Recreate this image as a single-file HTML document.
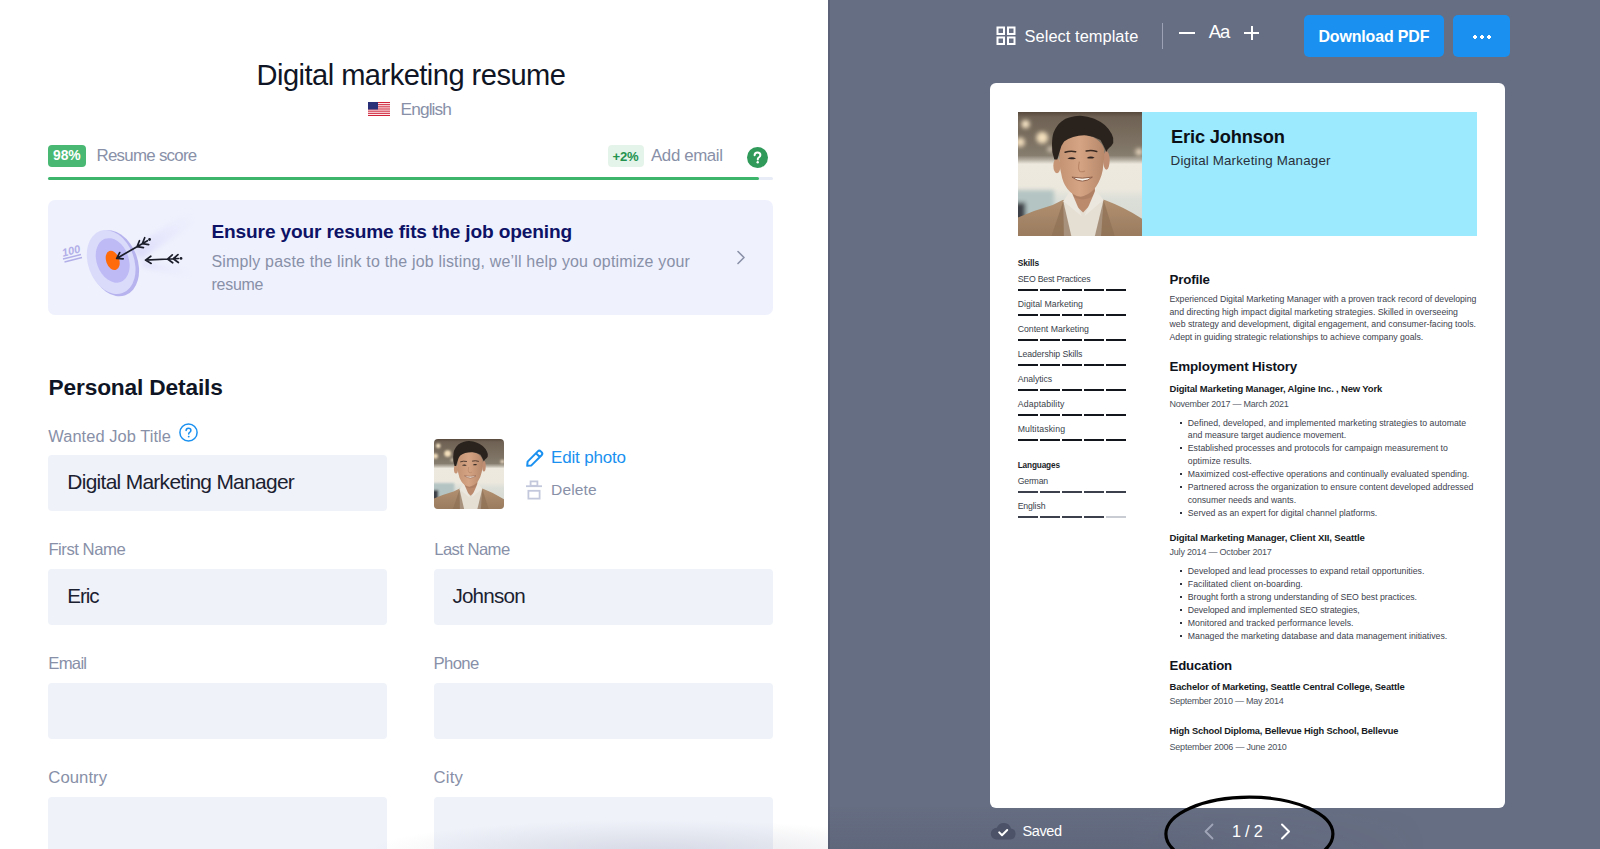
<!DOCTYPE html>
<html><head><meta charset="utf-8"><title>Digital marketing resume</title>
<style>
html,body{margin:0;padding:0;width:1600px;height:849px;overflow:hidden;background:#fff;}
body{position:relative;font-family:"Liberation Sans",sans-serif;}
.t{position:absolute;white-space:nowrap;line-height:1;}
.r{position:absolute;display:block;}
</style></head><body>
<svg width="0" height="0" style="position:absolute">
<defs>
<filter id="blur1" x="-30%" y="-30%" width="160%" height="160%"><feGaussianBlur stdDeviation="1.6"/></filter>
<filter id="blur0" x="-10%" y="-10%" width="120%" height="120%"><feGaussianBlur stdDeviation="0.4"/></filter>
<linearGradient id="bgg" x1="0" y1="0" x2="0" y2="1">
<stop offset="0" stop-color="#574a3d"/><stop offset="0.04" stop-color="#6f6254"/><stop offset="0.25" stop-color="#7d7263"/><stop offset="0.35" stop-color="#867d6e"/>
<stop offset="0.385" stop-color="#b5afa2"/><stop offset="0.42" stop-color="#eee9df"/><stop offset="0.62" stop-color="#ece8de"/><stop offset="0.7" stop-color="#dcdfd8"/><stop offset="1" stop-color="#d4d8d2"/>
</linearGradient>
<linearGradient id="jk" x1="0" y1="0" x2="0" y2="1"><stop offset="0" stop-color="#b39272"/><stop offset="1" stop-color="#9a7b5e"/></linearGradient>
<linearGradient id="face" x1="0" y1="0" x2="1" y2="0"><stop offset="0" stop-color="#c49373"/><stop offset="0.45" stop-color="#d4a484"/><stop offset="1" stop-color="#b8886b"/></linearGradient>
<symbol id="portrait" viewBox="0 0 100 100">
<rect width="100" height="100" fill="url(#bgg)"/>
<g filter="url(#blur1)">
<circle cx="6.1" cy="9.8" r="3.3" fill="#f6e4c4"/><circle cx="19.5" cy="20.7" r="4.8" fill="#f3dfbc"/><circle cx="1.8" cy="24.4" r="3.8" fill="#f0dcbc"/>
<circle cx="97.6" cy="32.3" r="2.8" fill="#e8d8c0"/><circle cx="26" cy="30" r="2.2" fill="#ddd0bc"/>
<rect x="-5" y="63" width="34" height="32" fill="#b4c4c2"/>
<rect x="-5" y="73" width="11" height="20" fill="#3e3f47"/>
</g>
<g filter="url(#blur0)">
<path d="M0 100 L0 85 Q14 79 28 75 L36 71 L62 69 L70 71 Q86 77 100 86 L100 100 Z" fill="url(#jk)"/>
<path d="M37 100 L36.5 72 L43 65 L61 65 L69 71 L67 100 Z" fill="#e4ded3"/>
<path d="M42.5 60 L62 60 L62 71 L52.5 81 L43 72 Z" fill="#bb8a6d"/><path d="M42.5 62 Q52 72 62 62 L62 67 Q52 74 42.5 67 Z" fill="#a87a60" opacity="0.6"/>
<path d="M36.5 72 L42.5 63 L51.5 84 Z" fill="#ece7de"/><path d="M69 71 L62.5 63 L53.5 84 Z" fill="#ece7de"/>
<path d="M27 100 L36.5 72 L43 100 Z" fill="#8e7055" opacity="0.7"/><path d="M78 100 L69 71 L62 100 Z" fill="#8e7055" opacity="0.7"/>
<ellipse cx="31.4" cy="43.3" rx="2.9" ry="6" fill="#c69576"/><ellipse cx="71.3" cy="39" rx="2.6" ry="7.5" fill="#bf8e72"/>
<path d="M33.5 28.7 Q33 44 34.8 49.4 Q36 57 39.6 61.6 Q44 67.5 50.6 68.3 Q57 67 62.8 60.4 Q67 54 68.3 46.9 Q70 38 69.5 30 Q66 20 52 18 Q38 18 33.5 28.7 Z" fill="url(#face)"/>
<path d="M29.3 38.4 Q27 32 27.4 26.2 Q27.5 20 28.7 16.5 Q31 11 34.8 7.9 Q38 5 42 4.3 Q46 2.8 50.6 3 Q56 3.5 61.6 5.5 Q66 7.5 70 10.4 Q73.5 13.5 75.6 17.7 Q77.5 21 76.8 25 Q75.5 27.5 73.8 28.7 Q72 30 71.3 32.3 Q69 27 66.5 22.6 Q61 19.5 55.5 18.9 Q50 18.5 44.5 20.1 Q40 21.5 37.2 23.8 Q34.5 27 33.5 32.3 Q32.5 35.5 31.7 38.4 Z" fill="#2b231e"/>
<path d="M38 32.5 q4 -1.5 8.5 -0.5 M55 31.5 q4 -1.2 8.5 0.3" stroke="#3a2a22" stroke-width="1.2" fill="none" stroke-linecap="round"/>
<path d="M39.8 37.6 Q43.2 35.3 46.8 37.4 Q43.2 38.8 39.8 37.6 Z M55.4 37 Q58.6 34.8 61.8 36.8 Q58.6 38.2 55.4 37 Z" fill="#2e2420"/>
<path d="M49.5 40 Q48 46 50 48 Q52 48.5 54 47.5" stroke="#b88567" stroke-width="0.9" fill="none"/>
<path d="M43.5 52.5 Q52 59 60 52.5 Q52 54.2 43.5 52.5 Z" fill="#f7f2ea" stroke="#8f5e48" stroke-width="0.8"/>
</g>
</symbol>
</defs>
</svg>
<div class="r" style="left:0.00px;top:0.00px;width:828.00px;height:849.00px;background:#ffffff;"></div>
<div class="t" style="left:256.50px;top:60.89px;font-size:29.070px;color:#0f1524;letter-spacing:-0.522px;">Digital marketing resume</div>
<svg class="r" style="left:368px;top:102px" width="22" height="14" viewBox="0 0 22 14">
<rect width="22" height="14" fill="#fff"/>
<g fill="#d0233a">
<rect y="0" width="22" height="1.1"/><rect y="2.15" width="22" height="1.1"/><rect y="4.3" width="22" height="1.1"/>
<rect y="6.45" width="22" height="1.1"/><rect y="8.6" width="22" height="1.1"/><rect y="10.75" width="22" height="1.1"/><rect y="12.9" width="22" height="1.1"/>
</g>
<rect width="10" height="7.5" fill="#2a3078"/>
</svg>
<div class="t" style="left:400.60px;top:100.76px;font-size:17.297px;color:#8890a8;letter-spacing:-0.905px;">English</div>
<div class="r" style="left:48.00px;top:145.00px;width:38.00px;height:22.00px;background:#48b873;border-radius:4.0px;"></div>
<div class="t" style="left:53.10px;top:149.34px;font-size:13.890px;color:#ffffff;font-weight:700;letter-spacing:-0.150px;">98%</div>
<div class="t" style="left:96.50px;top:148.03px;font-size:16.860px;color:#8890a8;letter-spacing:-0.723px;">Resume score</div>
<div class="r" style="left:607.50px;top:145.00px;width:36.00px;height:22.00px;background:#e5f4ea;border-radius:4.0px;"></div>
<div class="t" style="left:612.50px;top:150.02px;font-size:13.083px;color:#23924f;font-weight:700;letter-spacing:-0.150px;">+2%</div>
<div class="t" style="left:651.00px;top:148.03px;font-size:16.860px;color:#8890a8;letter-spacing:-0.372px;">Add email</div>
<svg class="r" style="left:747px;top:146.5px" width="21" height="21" viewBox="0 0 21 21">
<circle cx="10.5" cy="10.5" r="10.5" fill="#2f9a5a"/>
<path d="M7.6 8.3c0-1.7 1.3-2.8 2.9-2.8s2.9 1.1 2.9 2.6c0 1.3-.8 1.9-1.6 2.4-.7.4-1 .8-1 1.6v.4" fill="none" stroke="#fff" stroke-width="2" stroke-linecap="round"/>
<circle cx="10.7" cy="15.3" r="1.2" fill="#fff"/>
</svg>
<div class="r" style="left:48.00px;top:177.00px;width:725.00px;height:3.00px;background:#e8ecf6;border-radius:1.5px;"></div>
<div class="r" style="left:48.00px;top:177.00px;width:710.50px;height:3.00px;background:#3db66c;border-radius:1.5px;"></div>
<div class="r" style="left:48.00px;top:199.50px;width:725.00px;height:115.50px;background:#eff1fd;border-radius:7.0px;"></div>
<svg class="r" style="left:55px;top:205px" width="140" height="105" viewBox="0 0 140 105">
<defs>
<linearGradient id="trail" x1="0" y1="1" x2="1" y2="0"><stop offset="0" stop-color="#d6d5fa" stop-opacity="0.9"/><stop offset="1" stop-color="#e6e6fd" stop-opacity="0"/></linearGradient><linearGradient id="trail2" x1="0" y1="0" x2="1" y2="0"><stop offset="0" stop-color="#dcdbfa" stop-opacity="0.8"/><stop offset="1" stop-color="#e9e9fd" stop-opacity="0"/></linearGradient><filter id="tblur" x="-20%" y="-50%" width="140%" height="200%"><feGaussianBlur stdDeviation="2.5"/></filter>
</defs>
<g filter="url(#tblur)"><path d="M76 44 L134 6 L140 18 L86 54 Z" fill="url(#trail)"/><path d="M86 56 L138 64 L138 74 L88 62 Z" fill="url(#trail2)"/></g>
<g transform="translate(-1.5 0) rotate(-20 58 58)">
<ellipse cx="60" cy="59" rx="24" ry="34" fill="#b7b3ee"/>
<ellipse cx="58" cy="57" rx="23" ry="33" fill="#dadbfb"/>
<ellipse cx="60" cy="56" rx="16" ry="23" fill="#bdbaf6"/>
<ellipse cx="60" cy="56" rx="6.5" ry="10" fill="#ff6a0a"/>
</g>
<path d="M61.70 53.40 L92.43 35.75 M61.70 53.40 L68.26 53.78 M61.70 53.40 L64.68 47.54 M82.10 41.68 L88.43 42.66 M82.10 41.68 L84.44 35.72 M87.36 38.66 L93.69 39.64 M87.36 38.66 L89.71 32.70" fill="none" stroke="#1c1f2b" stroke-width="1.7" stroke-linecap="round" stroke-linejoin="round"/><circle cx="94.60" cy="34.50" r="1.4" fill="#1c1f2b"/><path d="M90.50 55.10 L123.50 53.52 M90.50 55.10 L96.17 58.43 M90.50 55.10 L95.82 51.24 M112.51 54.05 L117.70 57.80 M112.51 54.05 L117.31 49.81 M118.19 53.77 L123.38 57.53 M118.19 53.77 L122.99 49.54" fill="none" stroke="#1c1f2b" stroke-width="1.7" stroke-linecap="round" stroke-linejoin="round"/><circle cx="126.00" cy="53.40" r="1.4" fill="#1c1f2b"/>
<text x="6.5" y="49" font-family="Liberation Sans" font-style="italic" font-weight="700" font-size="11" fill="#b1aee8" transform="rotate(-14 18 44)">100</text>
<path d="M8 54 L26 49.5 M9.5 57 L27 52.5" stroke="#b1aee8" stroke-width="1.3"/>
</svg>
<div class="t" style="left:211.50px;top:222.11px;font-size:19.129px;color:#0d1266;font-weight:700;letter-spacing:-0.150px;">Ensure your resume fits the job opening</div>
<div class="t" style="left:211.50px;top:253.67px;font-size:15.988px;color:#8890a8;letter-spacing:0.180px;">Simply paste the link to the job listing, we’ll help you optimize your</div>
<div class="t" style="left:211.50px;top:276.72px;font-size:15.988px;color:#8890a8;letter-spacing:-0.263px;">resume</div>
<svg class="r" style="left:735px;top:250px" width="12" height="15" viewBox="0 0 12 15">
<path d="M3 1.5 L9 7.5 L3 13.5" fill="none" stroke="#8a91a8" stroke-width="1.6" stroke-linecap="round" stroke-linejoin="round"/>
</svg>
<div class="t" style="left:48.50px;top:376.17px;font-size:22.714px;color:#0f1524;font-weight:700;letter-spacing:-0.150px;">Personal Details</div>
<div class="t" style="left:48.30px;top:427.60px;font-size:16.424px;color:#8890a8;letter-spacing:0.065px;">Wanted Job Title</div>
<svg class="r" style="left:178.5px;top:422.5px" width="19" height="19" viewBox="0 0 19 19">
<circle cx="9.5" cy="9.5" r="8.6" fill="none" stroke="#1a91f0" stroke-width="1.5"/>
<path d="M7.1 7.6c0-1.4 1-2.3 2.4-2.3s2.4.9 2.4 2.1c0 1.1-.7 1.5-1.3 2-.6.4-.9.7-.9 1.4v.3" fill="none" stroke="#1a91f0" stroke-width="1.5" stroke-linecap="round"/>
<circle cx="9.7" cy="13.6" r="0.95" fill="#1a91f0"/>
</svg>
<div class="r" style="left:48.00px;top:455.00px;width:339.00px;height:55.50px;background:#eff2f9;border-radius:4.0px;"></div>
<div class="t" style="left:67.30px;top:472.48px;font-size:20.930px;color:#1b2130;letter-spacing:-0.696px;">Digital Marketing Manager</div>
<svg class="r" style="left:434px;top:439px;border-radius:4px;overflow:hidden" width="70" height="70" viewBox="0 0 100 100"><use href="#portrait"/></svg>
<svg class="r" style="left:525px;top:448px" width="20" height="20" viewBox="0 0 20 20">
<path d="M2.2 17.8 L2.6 13.6 L12.8 3.4 Q14.3 1.9 15.8 3.4 L16.6 4.2 Q18.1 5.7 16.6 7.2 L6.4 17.4 Z M11 5.2 L14.8 9" fill="none" stroke="#1a91f0" stroke-width="2" stroke-linejoin="round"/>
</svg>
<div class="t" style="left:551.00px;top:449.10px;font-size:17.006px;color:#1a91f0;letter-spacing:-0.176px;">Edit photo</div>
<svg class="r" style="left:525px;top:480px" width="18" height="20" viewBox="0 0 18 20">
<path d="M1 6.2 H17" stroke="#c3c8dc" stroke-width="1.8"/>
<rect x="5.6" y="1.4" width="6.8" height="4.4" fill="none" stroke="#c3c8dc" stroke-width="1.8"/>
<rect x="3.4" y="10.8" width="11.2" height="7.8" fill="none" stroke="#c3c8dc" stroke-width="1.8"/>
</svg>
<div class="t" style="left:551.00px;top:482.33px;font-size:15.552px;color:#8890a8;letter-spacing:0.159px;">Delete</div>
<div class="t" style="left:48.40px;top:541.95px;font-size:16.715px;color:#8890a8;letter-spacing:-0.481px;">First Name</div>
<div class="r" style="left:48.00px;top:569.00px;width:339.00px;height:56.00px;background:#eff2f9;border-radius:4.0px;"></div>
<div class="t" style="left:67.20px;top:586.23px;font-size:20.640px;color:#1b2130;letter-spacing:-1.049px;">Eric</div>
<div class="t" style="left:434.25px;top:541.95px;font-size:16.715px;color:#8890a8;letter-spacing:-0.603px;">Last Name</div>
<div class="r" style="left:434.00px;top:569.00px;width:339.00px;height:56.00px;background:#eff2f9;border-radius:4.0px;"></div>
<div class="t" style="left:452.40px;top:586.23px;font-size:20.640px;color:#1b2130;letter-spacing:-0.789px;">Johnson</div>
<div class="t" style="left:48.30px;top:655.95px;font-size:16.715px;color:#8890a8;letter-spacing:-0.750px;">Email</div>
<div class="r" style="left:48.00px;top:683.00px;width:339.00px;height:56.00px;background:#eff2f9;border-radius:4.0px;"></div>
<div class="t" style="left:433.60px;top:655.95px;font-size:16.715px;color:#8890a8;letter-spacing:-0.659px;">Phone</div>
<div class="r" style="left:434.00px;top:683.00px;width:339.00px;height:56.00px;background:#eff2f9;border-radius:4.0px;"></div>
<div class="t" style="left:48.30px;top:769.95px;font-size:16.715px;color:#8890a8;letter-spacing:0.045px;">Country</div>
<div class="r" style="left:48.00px;top:797.00px;width:339.00px;height:60.00px;background:#eff2f9;border-radius:4.0px;"></div>
<div class="t" style="left:433.60px;top:769.95px;font-size:16.715px;color:#8890a8;letter-spacing:0.204px;">City</div>
<div class="r" style="left:434.00px;top:797.00px;width:339.00px;height:60.00px;background:#eff2f9;border-radius:4.0px;"></div>
<div class="r" style="left:240px;top:800px;width:588px;height:49px;background:radial-gradient(ellipse 70% 100% at 70% 110%, rgba(120,125,150,0.22), rgba(120,125,150,0) 70%)"></div>
<div class="r" style="left:828.00px;top:0.00px;width:772.00px;height:849.00px;background:#666e83;"></div>
<div class="r" style="left:828.00px;top:0.00px;width:2.00px;height:849.00px;background:#5c6378;"></div>
<svg class="r" style="left:996px;top:26px" width="21" height="20" viewBox="0 0 21 20">
<g fill="none" stroke="#fff" stroke-width="2">
<rect x="1.5" y="1.5" width="6.5" height="6.5"/><rect x="12" y="1.5" width="6.5" height="6.5"/>
<rect x="1.5" y="11.5" width="6.5" height="6.5"/><rect x="12" y="11.5" width="6.5" height="6.5"/>
</g></svg>
<div class="t" style="left:1024.60px;top:27.60px;font-size:16.424px;color:#ffffff;letter-spacing:0.042px;">Select template</div>
<div class="r" style="left:1162.30px;top:23.00px;width:1.20px;height:25.50px;background:#9da3b4;"></div>
<div class="r" style="left:1179.00px;top:31.50px;width:15.50px;height:2.10px;background:#ffffff;"></div>
<div class="t" style="left:1208.80px;top:22.97px;font-size:18.459px;color:#ffffff;letter-spacing:-1.079px;">Aa</div>
<div class="r" style="left:1244.40px;top:31.80px;width:14.80px;height:2.10px;background:#ffffff;"></div>
<div class="r" style="left:1250.80px;top:25.50px;width:2.10px;height:14.60px;background:#ffffff;"></div>
<div class="r" style="left:1304.00px;top:15.00px;width:140.00px;height:42.00px;background:#1a91f0;border-radius:5.0px;"></div>
<div class="t" style="left:1318.50px;top:28.98px;font-size:15.967px;color:#ffffff;font-weight:700;letter-spacing:-0.150px;">Download PDF</div>
<div class="r" style="left:1453.00px;top:15.00px;width:56.50px;height:42.00px;background:#1a91f0;border-radius:5.0px;"></div>
<div class="r" style="left:1473px;top:34.7px;width:18px;height:4px;background:radial-gradient(circle at 2px 2px,#fff 1.7px,transparent 2px),radial-gradient(circle at 9px 2px,#fff 1.7px,transparent 2px),radial-gradient(circle at 16px 2px,#fff 1.7px,transparent 2px)"></div>
<div class="r" style="left:990.00px;top:83.00px;width:515.00px;height:725.00px;background:#ffffff;border-radius:6.0px;"></div>
<svg class="r" style="left:1018px;top:112px" width="124" height="124" viewBox="0 0 100 100"><use href="#portrait"/></svg>
<div class="r" style="left:1142.00px;top:112.00px;width:335.00px;height:124.00px;background:#9beafd;"></div>
<div class="t" style="left:1171.00px;top:127.80px;font-size:18.257px;color:#0b0f16;font-weight:700;letter-spacing:-0.150px;">Eric Johnson</div>
<div class="t" style="left:1170.60px;top:153.58px;font-size:13.372px;color:#2a303b;letter-spacing:0.163px;">Digital Marketing Manager</div>
<div class="t" style="left:1017.70px;top:259.16px;font-size:8.430px;color:#1a1e28;font-weight:700;letter-spacing:-0.105px;">Skills</div>
<div class="t" style="left:1017.70px;top:275.02px;font-size:8.721px;color:#3a3f4b;letter-spacing:-0.216px;">SEO Best Practices</div>
<div class="r" style="left:1018.00px;top:289.00px;width:20.00px;height:2.00px;background:#13161d;"></div>
<div class="r" style="left:1040.00px;top:289.00px;width:20.00px;height:2.00px;background:#13161d;"></div>
<div class="r" style="left:1062.00px;top:289.00px;width:20.00px;height:2.00px;background:#13161d;"></div>
<div class="r" style="left:1084.00px;top:289.00px;width:20.00px;height:2.00px;background:#13161d;"></div>
<div class="r" style="left:1106.00px;top:289.00px;width:20.00px;height:2.00px;background:#13161d;"></div>
<div class="t" style="left:1017.70px;top:300.02px;font-size:8.721px;color:#3a3f4b;letter-spacing:0.022px;">Digital Marketing</div>
<div class="r" style="left:1018.00px;top:314.00px;width:20.00px;height:2.00px;background:#13161d;"></div>
<div class="r" style="left:1040.00px;top:314.00px;width:20.00px;height:2.00px;background:#13161d;"></div>
<div class="r" style="left:1062.00px;top:314.00px;width:20.00px;height:2.00px;background:#13161d;"></div>
<div class="r" style="left:1084.00px;top:314.00px;width:20.00px;height:2.00px;background:#13161d;"></div>
<div class="r" style="left:1106.00px;top:314.00px;width:20.00px;height:2.00px;background:#13161d;"></div>
<div class="t" style="left:1017.70px;top:325.02px;font-size:8.721px;color:#3a3f4b;">Content Marketing</div>
<div class="r" style="left:1018.00px;top:339.00px;width:20.00px;height:2.00px;background:#13161d;"></div>
<div class="r" style="left:1040.00px;top:339.00px;width:20.00px;height:2.00px;background:#13161d;"></div>
<div class="r" style="left:1062.00px;top:339.00px;width:20.00px;height:2.00px;background:#13161d;"></div>
<div class="r" style="left:1084.00px;top:339.00px;width:20.00px;height:2.00px;background:#13161d;"></div>
<div class="r" style="left:1106.00px;top:339.00px;width:20.00px;height:2.00px;background:#13161d;"></div>
<div class="t" style="left:1017.70px;top:350.02px;font-size:8.721px;color:#3a3f4b;letter-spacing:-0.071px;">Leadership Skills</div>
<div class="r" style="left:1018.00px;top:364.00px;width:20.00px;height:2.00px;background:#13161d;"></div>
<div class="r" style="left:1040.00px;top:364.00px;width:20.00px;height:2.00px;background:#13161d;"></div>
<div class="r" style="left:1062.00px;top:364.00px;width:20.00px;height:2.00px;background:#13161d;"></div>
<div class="r" style="left:1084.00px;top:364.00px;width:20.00px;height:2.00px;background:#13161d;"></div>
<div class="r" style="left:1106.00px;top:364.00px;width:20.00px;height:2.00px;background:#13161d;"></div>
<div class="t" style="left:1017.70px;top:375.02px;font-size:8.721px;color:#3a3f4b;letter-spacing:-0.062px;">Analytics</div>
<div class="r" style="left:1018.00px;top:389.00px;width:20.00px;height:2.00px;background:#13161d;"></div>
<div class="r" style="left:1040.00px;top:389.00px;width:20.00px;height:2.00px;background:#13161d;"></div>
<div class="r" style="left:1062.00px;top:389.00px;width:20.00px;height:2.00px;background:#13161d;"></div>
<div class="r" style="left:1084.00px;top:389.00px;width:20.00px;height:2.00px;background:#13161d;"></div>
<div class="r" style="left:1106.00px;top:389.00px;width:20.00px;height:2.00px;background:#13161d;"></div>
<div class="t" style="left:1017.70px;top:400.02px;font-size:8.721px;color:#3a3f4b;letter-spacing:0.147px;">Adaptability</div>
<div class="r" style="left:1018.00px;top:414.00px;width:20.00px;height:2.00px;background:#13161d;"></div>
<div class="r" style="left:1040.00px;top:414.00px;width:20.00px;height:2.00px;background:#13161d;"></div>
<div class="r" style="left:1062.00px;top:414.00px;width:20.00px;height:2.00px;background:#13161d;"></div>
<div class="r" style="left:1084.00px;top:414.00px;width:20.00px;height:2.00px;background:#13161d;"></div>
<div class="r" style="left:1106.00px;top:414.00px;width:20.00px;height:2.00px;background:#13161d;"></div>
<div class="t" style="left:1017.70px;top:425.02px;font-size:8.721px;color:#3a3f4b;letter-spacing:0.114px;">Multitasking</div>
<div class="r" style="left:1018.00px;top:439.00px;width:20.00px;height:2.00px;background:#13161d;"></div>
<div class="r" style="left:1040.00px;top:439.00px;width:20.00px;height:2.00px;background:#13161d;"></div>
<div class="r" style="left:1062.00px;top:439.00px;width:20.00px;height:2.00px;background:#13161d;"></div>
<div class="r" style="left:1084.00px;top:439.00px;width:20.00px;height:2.00px;background:#13161d;"></div>
<div class="r" style="left:1106.00px;top:439.00px;width:20.00px;height:2.00px;background:#13161d;"></div>
<div class="t" style="left:1017.70px;top:462.12px;font-size:8.240px;color:#1a1e28;font-weight:700;letter-spacing:-0.150px;">Languages</div>
<div class="t" style="left:1017.70px;top:476.82px;font-size:8.721px;color:#3a3f4b;letter-spacing:-0.201px;">German</div>
<div class="r" style="left:1018.00px;top:491.00px;width:20.00px;height:2.00px;background:#3b404c;"></div>
<div class="r" style="left:1040.00px;top:491.00px;width:20.00px;height:2.00px;background:#3b404c;"></div>
<div class="r" style="left:1062.00px;top:491.00px;width:20.00px;height:2.00px;background:#3b404c;"></div>
<div class="r" style="left:1084.00px;top:491.00px;width:20.00px;height:2.00px;background:#3b404c;"></div>
<div class="r" style="left:1106.00px;top:491.00px;width:20.00px;height:2.00px;background:#3b404c;"></div>
<div class="t" style="left:1017.70px;top:502.12px;font-size:8.721px;color:#3a3f4b;letter-spacing:-0.134px;">English</div>
<div class="r" style="left:1018.00px;top:516.00px;width:20.00px;height:2.00px;background:#3b404c;"></div>
<div class="r" style="left:1040.00px;top:516.00px;width:20.00px;height:2.00px;background:#3b404c;"></div>
<div class="r" style="left:1062.00px;top:516.00px;width:20.00px;height:2.00px;background:#3b404c;"></div>
<div class="r" style="left:1084.00px;top:516.00px;width:20.00px;height:2.00px;background:#3b404c;"></div>
<div class="r" style="left:1106.00px;top:516.00px;width:20.00px;height:2.00px;background:#c9ccd2;"></div>
<div class="t" style="left:1169.50px;top:273.24px;font-size:13.304px;color:#0f131b;font-weight:700;letter-spacing:-0.150px;">Profile</div>
<div class="t" style="left:1169.50px;top:294.62px;font-size:8.721px;color:#3d424d;letter-spacing:-0.036px;">Experienced Digital Marketing Manager with a proven track record of developing</div>
<div class="t" style="left:1169.50px;top:307.62px;font-size:8.721px;color:#3d424d;letter-spacing:0.007px;">and directing high impact digital marketing strategies. Skilled in overseeing</div>
<div class="t" style="left:1169.50px;top:320.42px;font-size:8.721px;color:#3d424d;letter-spacing:-0.005px;">web strategy and development, digital engagement, and consumer-facing tools.</div>
<div class="t" style="left:1169.50px;top:333.32px;font-size:8.721px;color:#3d424d;letter-spacing:-0.019px;">Adept in guiding strategic relationships to achieve company goals.</div>
<div class="t" style="left:1169.50px;top:360.44px;font-size:13.425px;color:#0f131b;font-weight:700;letter-spacing:-0.150px;">Employment History</div>
<div class="t" style="left:1169.50px;top:384.49px;font-size:9.465px;color:#161a22;font-weight:700;letter-spacing:-0.150px;">Digital Marketing Manager, Algine Inc. , New York</div>
<div class="t" style="left:1169.50px;top:399.67px;font-size:9.012px;color:#4a4f5a;letter-spacing:-0.253px;">November 2017 — March 2021</div>
<div class="t" style="left:1187.80px;top:418.62px;font-size:8.721px;color:#3d424d;letter-spacing:0.031px;">Defined, developed, and implemented marketing strategies to automate</div>
<div class="r" style="left:1180.00px;top:422.00px;width:2.00px;height:2.00px;background:#2f3440;"></div>
<div class="t" style="left:1187.80px;top:431.42px;font-size:8.721px;color:#3d424d;letter-spacing:-0.017px;">and measure target audience movement.</div>
<div class="t" style="left:1187.80px;top:444.32px;font-size:8.721px;color:#3d424d;letter-spacing:-0.005px;">Established processes and protocols for campaign measurement to</div>
<div class="r" style="left:1180.00px;top:447.00px;width:2.00px;height:2.00px;background:#2f3440;"></div>
<div class="t" style="left:1187.80px;top:457.32px;font-size:8.721px;color:#3d424d;letter-spacing:0.062px;">optimize results.</div>
<div class="t" style="left:1187.80px;top:470.12px;font-size:8.721px;color:#3d424d;letter-spacing:0.028px;">Maximized cost-effective operations and continually evaluated spending.</div>
<div class="r" style="left:1180.00px;top:473.00px;width:2.00px;height:2.00px;background:#2f3440;"></div>
<div class="t" style="left:1187.80px;top:483.32px;font-size:8.721px;color:#3d424d;letter-spacing:-0.013px;">Partnered across the organization to ensure content developed addressed</div>
<div class="r" style="left:1180.00px;top:486.00px;width:2.00px;height:2.00px;background:#2f3440;"></div>
<div class="t" style="left:1187.80px;top:496.32px;font-size:8.721px;color:#3d424d;letter-spacing:-0.032px;">consumer needs and wants.</div>
<div class="t" style="left:1187.80px;top:509.32px;font-size:8.721px;color:#3d424d;">Served as an expert for digital channel platforms.</div>
<div class="r" style="left:1180.00px;top:512.00px;width:2.00px;height:2.00px;background:#2f3440;"></div>
<div class="t" style="left:1169.50px;top:532.68px;font-size:9.593px;color:#161a22;font-weight:700;letter-spacing:-0.141px;">Digital Marketing Manager, Client XII, Seattle</div>
<div class="t" style="left:1169.50px;top:548.27px;font-size:9.012px;color:#4a4f5a;letter-spacing:-0.205px;">July 2014 — October 2017</div>
<div class="t" style="left:1187.80px;top:567.42px;font-size:8.721px;color:#3d424d;">Developed and lead processes to expand retail opportunities.</div>
<div class="r" style="left:1180.00px;top:570.00px;width:2.00px;height:2.00px;background:#2f3440;"></div>
<div class="t" style="left:1187.80px;top:580.22px;font-size:8.721px;color:#3d424d;letter-spacing:0.036px;">Facilitated client on-boarding.</div>
<div class="r" style="left:1180.00px;top:583.00px;width:2.00px;height:2.00px;background:#2f3440;"></div>
<div class="t" style="left:1187.80px;top:593.22px;font-size:8.721px;color:#3d424d;letter-spacing:-0.035px;">Brought forth a strong understanding of SEO best practices.</div>
<div class="r" style="left:1180.00px;top:596.00px;width:2.00px;height:2.00px;background:#2f3440;"></div>
<div class="t" style="left:1187.80px;top:606.02px;font-size:8.721px;color:#3d424d;letter-spacing:-0.063px;">Developed and implemented SEO strategies,</div>
<div class="r" style="left:1180.00px;top:609.00px;width:2.00px;height:2.00px;background:#2f3440;"></div>
<div class="t" style="left:1187.80px;top:619.32px;font-size:8.721px;color:#3d424d;letter-spacing:0.012px;">Monitored and tracked performance levels.</div>
<div class="r" style="left:1180.00px;top:622.00px;width:2.00px;height:2.00px;background:#2f3440;"></div>
<div class="t" style="left:1187.80px;top:632.12px;font-size:8.721px;color:#3d424d;letter-spacing:-0.015px;">Managed the marketing database and data management initiatives.</div>
<div class="r" style="left:1180.00px;top:635.00px;width:2.00px;height:2.00px;background:#2f3440;"></div>
<div class="t" style="left:1169.50px;top:659.41px;font-size:13.220px;color:#0f131b;font-weight:700;letter-spacing:-0.150px;">Education</div>
<div class="t" style="left:1169.50px;top:682.19px;font-size:9.459px;color:#161a22;font-weight:700;letter-spacing:-0.150px;">Bachelor of Marketing, Seattle Central College, Seattle</div>
<div class="t" style="left:1169.50px;top:697.47px;font-size:9.012px;color:#4a4f5a;letter-spacing:-0.243px;">September 2010 — May 2014</div>
<div class="t" style="left:1169.50px;top:727.44px;font-size:9.285px;color:#161a22;font-weight:700;letter-spacing:-0.150px;">High School Diploma, Bellevue High School, Bellevue</div>
<div class="t" style="left:1169.50px;top:742.87px;font-size:9.012px;color:#4a4f5a;letter-spacing:-0.210px;">September 2006 — June 2010</div>
<div class="r" style="left:828px;top:806px;width:600px;height:43px;background:linear-gradient(180deg,rgba(50,56,76,0),rgba(50,56,76,0.13));-webkit-mask-image:linear-gradient(90deg,#000 50%,transparent);mask-image:linear-gradient(90deg,#000 50%,transparent)"></div>
<svg class="r" style="left:990px;top:821px" width="27" height="20" viewBox="0 0 27 20">
<path d="M6.5 18.5 H20.5 A5.5 5.5 0 0 0 21 7.6 A7.5 7.5 0 0 0 6.8 6.8 A5.8 5.8 0 0 0 6.5 18.5 Z" fill="#4c5368"/>
<path d="M9.2 11.4 L12 14.2 L17.2 9" fill="none" stroke="#fff" stroke-width="2" stroke-linecap="round" stroke-linejoin="round"/>
</svg>
<div class="t" style="left:1022.40px;top:823.95px;font-size:14.535px;color:#ffffff;letter-spacing:-0.379px;">Saved</div>
<svg class="r" style="left:1200px;top:822px" width="100" height="20" viewBox="0 0 100 20">
<path d="M12.5 2.5 L5.5 9.5 L12.5 16.5" fill="none" stroke="#a0a6b8" stroke-width="1.8" stroke-linecap="round" stroke-linejoin="round"/>
<path d="M82 2.5 L89 9.5 L82 16.5" fill="none" stroke="#ffffff" stroke-width="2" stroke-linecap="round" stroke-linejoin="round"/>
</svg>
<div class="t" style="left:1231.90px;top:823.22px;font-size:16.279px;color:#ffffff;letter-spacing:4.185px;">1/2</div>
<svg class="r" style="left:1160px;top:790px" width="180" height="90" viewBox="0 0 180 90">
<ellipse cx="89.4" cy="44" rx="83.5" ry="36.8" fill="none" stroke="#000" stroke-width="3.2"/>
</svg>
</body></html>
